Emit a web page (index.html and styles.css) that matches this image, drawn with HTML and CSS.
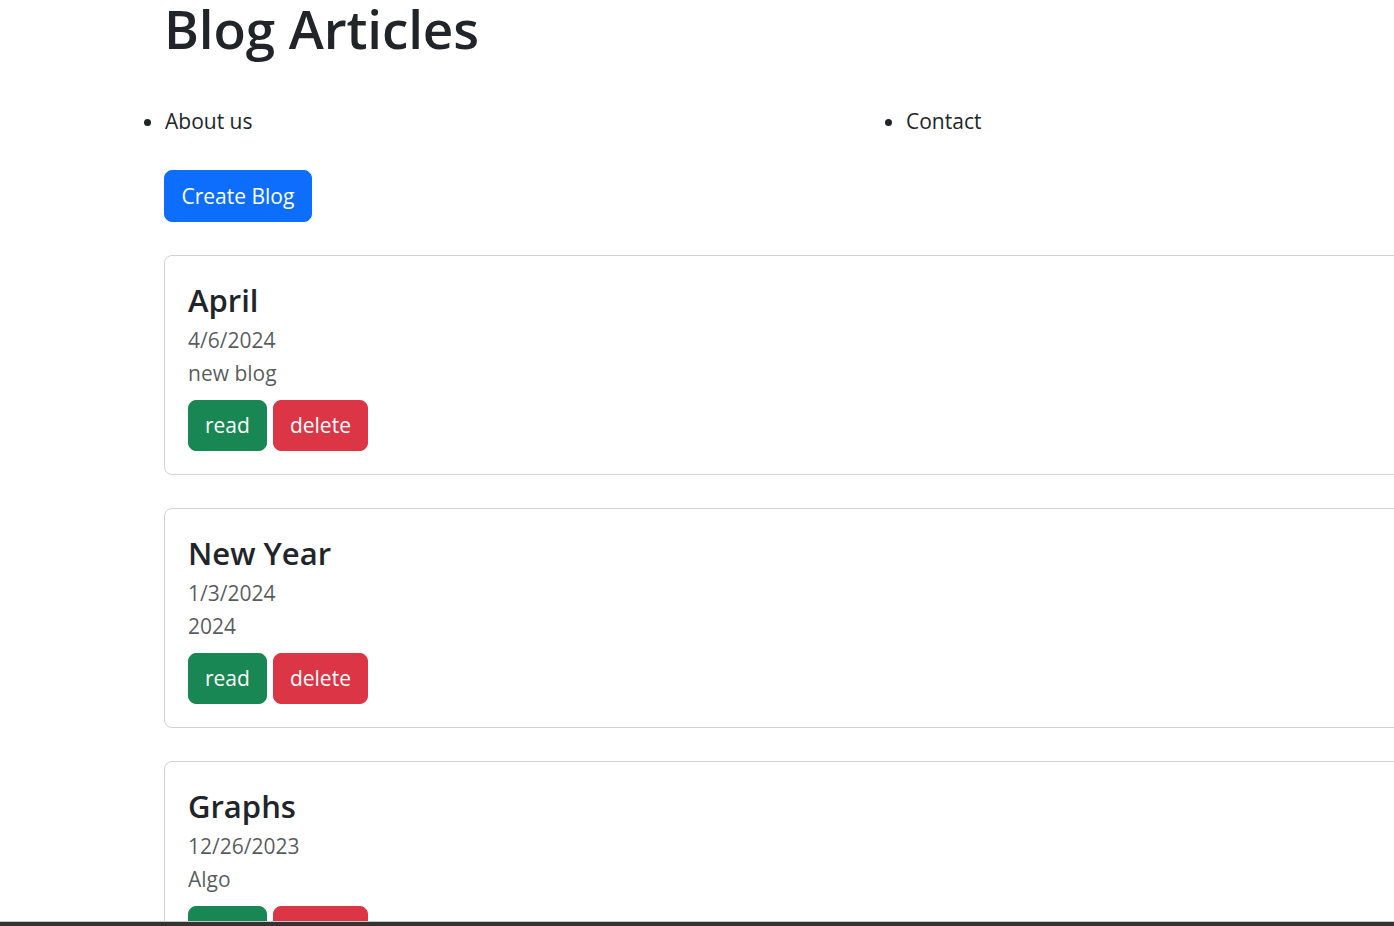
FILE: index.html
```html
<!DOCTYPE html>
<html lang="en">
<head>
<meta charset="utf-8">
<title>Blog Articles</title>
<link rel="stylesheet" href="styles.css">
</head>
<body>
<div class="page">
  <h1 class="page-title">Blog Articles</h1>
  <ul class="nav-list">
    <li>About us</li>
    <li>Contact</li>
  </ul>
  <button class="btn btn-primary">Create Blog</button>
  <div class="cards">
    <div class="card">
      <h3 class="card-title">April</h3>
      <div class="card-subtitle">4/6/2024</div>
      <p class="card-text">new blog</p>
      <div class="actions">
        <button class="btn btn-success">read</button>
        <button class="btn btn-danger">delete</button>
      </div>
    </div>
    <div class="card">
      <h3 class="card-title">New Year</h3>
      <div class="card-subtitle">1/3/2024</div>
      <p class="card-text">2024</p>
      <div class="actions">
        <button class="btn btn-success">read</button>
        <button class="btn btn-danger">delete</button>
      </div>
    </div>
    <div class="card">
      <h3 class="card-title">Graphs</h3>
      <div class="card-subtitle">12/26/2023</div>
      <p class="card-text">Algo</p>
      <div class="actions">
        <button class="btn btn-success">read</button>
        <button class="btn btn-danger">delete</button>
      </div>
    </div>
  </div>
</div>
<div class="scrollbar"></div>
</body>
</html>
```

FILE: styles.css
```css
html, body {
  margin: 0;
  padding: 0;
  background: #fff;
}
body {
  font-family: "Open Sans", "Noto Sans", "Liberation Sans", sans-serif;
  font-size: 21px;
  line-height: 33px;
  color: #212529;
}
.page {
  height: 926px;
  overflow: hidden;
  padding-left: 164px;
  box-sizing: border-box;
}
.page-title {
  margin: 0;
  font-size: 53px;
  font-weight: 600;
  line-height: 58px;
  letter-spacing: -0.1px;
}
.nav-list {
  display: flex;
  margin: 47px 0 0 0;
  padding: 0 0 0 1px;
  list-style: disc;
}
.nav-list li {
  flex: 0 0 741px;
}
.btn {
  display: inline-block;
  font-family: inherit;
  font-size: 21px;
  line-height: 33px;
  padding: 8px 16px;
  border: 1px solid transparent;
  border-radius: 8px;
  color: #fff;
  cursor: pointer;
}
.btn-primary {
  margin-top: 32px;
  padding: 8.5px 16.5px;
  background: #0d6efd;
  border-color: #0d6efd;
}
.btn-success {
  background: #198754;
  border-color: #198754;
}
.btn-danger {
  background: #dc3545;
  border-color: #dc3545;
}
.cards {
  display: flex;
  flex-direction: column;
  gap: 33.5px;
  margin-top: 33px;
  width: 1400px;
}
.card {
  border: 1px solid rgba(0, 0, 0, 0.175);
  border-radius: 8px;
  padding: 22px 22px 22.5px 23px;
}
.card-title {
  margin: 3px 0 5px 0;
  font-size: 31px;
  font-weight: 600;
  line-height: 38px;
}
.card-subtitle,
.card-text {
  color: rgba(33, 37, 41, 0.75);
}
.card-text {
  margin: 0 0 10px 0;
}
.actions {
  display: flex;
  gap: 6px;
}
.scrollbar {
  position: fixed;
  left: 0;
  right: 0;
  bottom: 0;
  height: 4px;
  background: #333;
  border-top: 1px solid #c4c4c4;
}
```
